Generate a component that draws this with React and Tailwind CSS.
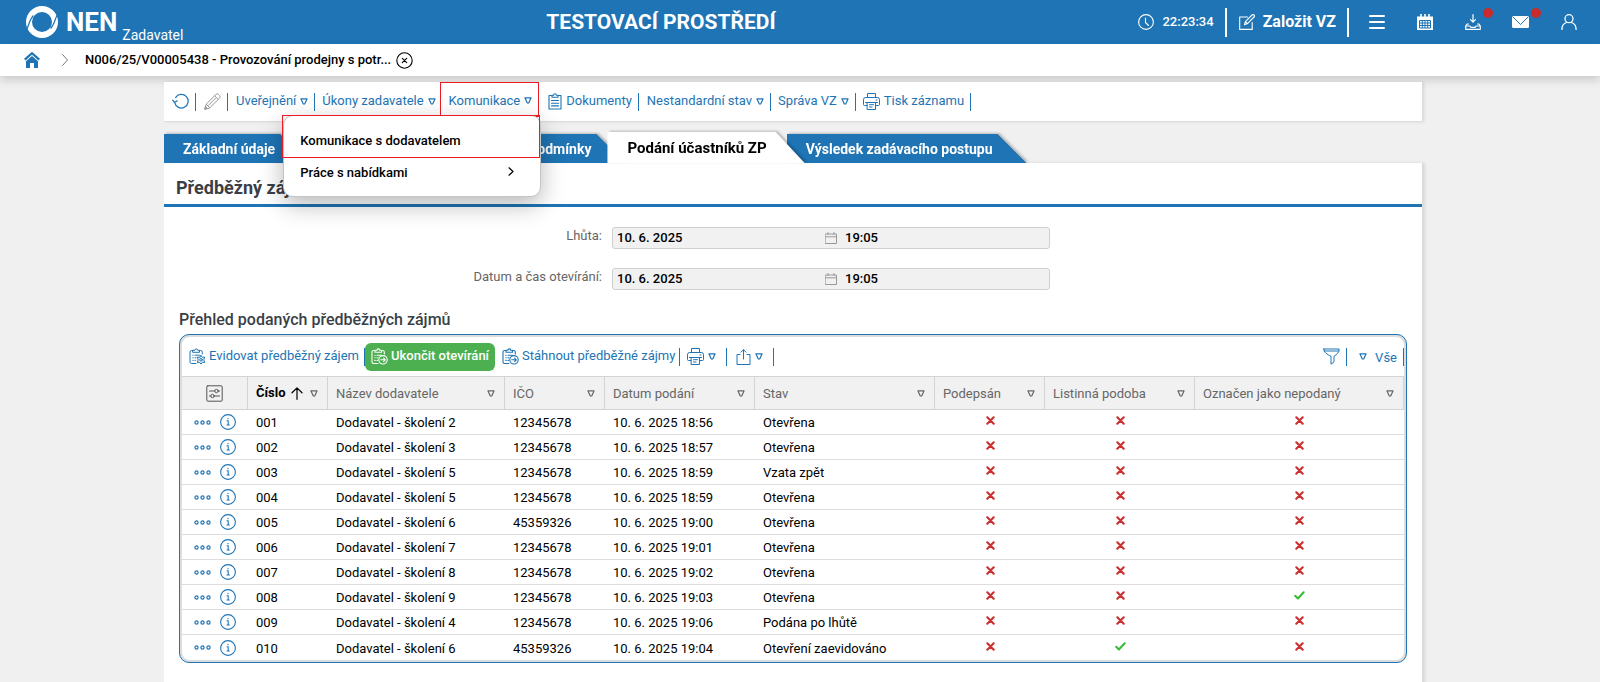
import React from "react";

function Svg({ className = "size-4", children, sw = 1, box = "0 0 16 16", fill = "none" }) {
  return (
    <svg
      className={`${className} shrink-0`}
      viewBox={box}
      fill={fill}
      stroke="currentColor"
      strokeWidth={sw}
      strokeLinecap="round"
      strokeLinejoin="round"
      aria-hidden="true"
    >
      {children}
    </svg>
  );
}

const Triangle = ({ className = "" }) => (
  <Svg className={`w-2 h-[7px] ${className}`} box="0 0 8 7" sw={1.2}>
    <path d="M1 .9h6L4.7 6H3.3Z" />
  </Svg>
);

const Refresh = () => (
  <Svg className="size-[17px]" box="0 0 17 17" sw={1.2}>
    <path d="M2.700 9.600A6.800 6.800 0 1 0 3.600 4.600M.6 7.200l2.100 2.300 2.500-1.700" />
  </Svg>
);

const Pencil = () => (
  <Svg className="size-[17px] text-[#999]" box="0 0 17 17">
    <path d="m1 16 1.200-4.800L12 1.400a1.700 1.700 0 0 1 2.400 0l1.200 1.200a1.700 1.700 0 0 1 0 2.400L5.800 14.800ZM2.200 11.200l3.600 3.600M10.600 2.800l3.600 3.600M4.400 12.400l7.400-7.400M1 16l2.400-.6-1.800-1.800Z" />
  </Svg>
);

const Clipboard = () => (
  <Svg className="w-[14px] h-[17px]" box="0 0 14 17" sw={1.1}>
    <path d="M4 2.500H1v13.500h12V2.500h-3M4 4.200h6V2.200H8.400a1.400 1.400 0 0 0-2.800 0H4Z" />
    <path d="M3.500 7.500h7M3.500 10.200h7M3.500 12.900h7" />
  </Svg>
);

const Printer = () => (
  <Svg className="size-[17px]" box="0 0 17 17">
    <path d="M4.500 4.500v-4h8v4M4 12.500H1.500a1 1 0 0 1-1-1v-5a2 2 0 0 1 2-2h12a2 2 0 0 1 2 2v5a1 1 0 0 1-1 1H13M4.500 9.500h8v7h-8ZM2.500 9.500h12M6.500 11.700h4M6.500 14h2.500M13 7h1" />
  </Svg>
);

const ClipboardBase = () => (
  <path d="M4 2.500H2.600a1.600 1.600 0 0 0-1.600 1.600v9.800a1.600 1.600 0 0 0 1.600 1.600H7M10.500 2.500h1.200a1.600 1.600 0 0 1 1.600 1.600V6M4 4.300h6.500V2.300H8.700a1.400 1.400 0 0 0-2.800 0H4ZM3.800 7.200h.4M6 7.200h4.500M3.800 9.800h.4M6 9.800h1M3.800 12.400h.4M6 12.400h.5" />
);

const ClipboardGear = () => (
  <Svg className="size-[17px]" box="0 0 17 17">
    <ClipboardBase />
    <circle cx="12" cy="11.800" r="1.300" />
    <path d="m12 7.500 1.300 1.800 2.300-.2-.8 2.700.8 2.700-2.300-.2-1.300 1.800-1.300-1.800-2.300.2.800-2.700-.8-2.700 2.300.2Z" />
  </Svg>
);

const ClipboardArrow = () => (
  <Svg className="size-[17px]" box="0 0 17 17" sw={1.1}>
    <ClipboardBase />
    <circle cx="12" cy="11.800" r="4.200" />
    <path d="M9.800 11.800h4.400M12.600 10.100l1.700 1.700-1.700 1.700" />
  </Svg>
);

const Share = () => (
  <Svg className="w-[15px] h-4" box="0 0 15 16">
    <path d="M4 5.500H1v10h13v-10h-3M7.500 10V.8M5 3.200 7.500.7 10 3.200" />
  </Svg>
);

const Funnel = () => (
  <Svg className="size-[17px]" box="0 0 17 17">
    <path d="M.8 1h15.400c0 3.600-2.400 5.400-5.200 7.200v5.600l-3 2.400V8.200C4.200 6.400.8 4.600.8 1ZM1.200 3h14.600" />
  </Svg>
);

const Settings = () => (
  <Svg className="size-[17px] text-[#555]" box="0 0 17 17">
    <rect x=".8" y=".8" width="15.400" height="15.400" rx="1" />
    <path d="M3.500 6h5M12.500 6h1M3.500 11h1M8.500 11h5" />
    <circle cx="10.500" cy="6" r="1.700" />
    <circle cx="6.500" cy="11" r="1.700" />
  </Svg>
);

const ArrowUp = () => (
  <Svg className="w-3 h-[13px]" box="0 0 12 13" sw={1.2}>
    <path d="M6 12.300V1M1 5.800 6 .9l5 4.900" />
  </Svg>
);

const Dots = () => (
  <Svg className="w-[17px] h-[5px]" box="0 0 17 5" sw={1.2}>
    <circle cx="2.500" cy="2.500" r="1.600" />
    <circle cx="8.500" cy="2.500" r="1.600" />
    <circle cx="14.500" cy="2.500" r="1.600" />
  </Svg>
);

const Info = () => (
  <Svg className="size-4" sw={1.1}>
    <circle cx="8" cy="8" r="7.400" />
    <path d="M7 6.800h1.200v4M7 11h2.400M8 4.300v.5" />
  </Svg>
);

const CalendarSmall = () => (
  <Svg className="size-3 text-[#999]" box="0 0 12 12">
    <path d="M.5 2h11v9.500H.5ZM.5 4.800h11M3 .5v2M9 .5v2" />
  </Svg>
);

const Cross = () => (
  <Svg className="size-[9px] text-[#cc2f2f]" box="0 0 9 9" sw={2.1}>
    <path d="m1.300 1.300 6.400 6.400M7.700 1.300 1.300 7.700" />
  </Svg>
);

const Check = () => (
  <Svg className="w-[11px] h-[9px] text-[#33bb33]" box="0 0 11 9" sw={2}>
    <path d="m1.200 4.800 2.700 2.700 5.800-6.200" />
  </Svg>
);

function HeaderIcon({ label, dot, children }) {
  return (
    <button type="button" aria-label={label} className="relative flex h-11 w-12 items-center justify-center">
      {children}
      {dot && <span className="absolute left-[34px] top-2 size-[10px] rounded-full bg-[#cc2b2b]" />}
    </button>
  );
}

function Header() {
  return (
    <header className="flex h-11 items-center justify-between bg-[#1e74b4] pl-[26px] pr-[7px] text-white">
      <div className="flex h-full items-center">
        <svg className="size-8 shrink-0" viewBox="0 0 32 32" aria-hidden="true">
          <circle cx="16" cy="16" r="13" fill="none" stroke="#fff" strokeWidth="6" />
          <path d="M.5 23.500C3 20 3.200 13.500 7.500 9.500M31.500 8.500C29 12 28.800 18.500 24.500 22.500" fill="none" stroke="#1e74b4" strokeWidth="1.200" />
        </svg>
        <span className="ml-2 text-[26px] font-bold leading-8">NEN</span>
        <span className="mb-[1px] ml-[5px] self-end text-sm leading-4">Zadavatel</span>
      </div>
      <h1 className="text-[21px] font-bold leading-6">TESTOVACÍ PROSTŘEDÍ</h1>
      <div className="flex items-center">
        <Svg sw={1.1}>
          <circle cx="8" cy="8" r="7.400" />
          <path d="M7.500 4v4.500l3 3" />
        </Svg>
        <time className="ml-2 text-[13px] font-medium">22:23:34</time>
        <span className="ml-[11px] h-[29px] w-[2px] bg-white" />
        <button type="button" className="ml-3 flex items-center gap-2 text-base font-bold leading-5">
          <Svg className="size-4" sw={1.1}>
            <path d="M8.500 3H.7v12.400h12.500V8.500M5.400 10.800l1-3.200L13 1a1.300 1.300 0 0 1 2 2L8.500 9.600ZM6.400 7.600l2.100 2" />
          </Svg>
          Založit VZ
        </button>
        <span className="ml-[11px] h-[29px] w-[2px] bg-white" />
        <div className="ml-1 flex">
          <HeaderIcon label="Menu">
            <Svg className="size-4" sw={2}>
              <path d="M1 2h14M1 8h14M1 14h14" />
            </Svg>
          </HeaderIcon>
          <HeaderIcon label="Kalendář">
            <svg className="size-4" viewBox="0 0 16 16" aria-hidden="true">
              <path d="M0 2.500h16V16H0Z" fill="#fff" />
              <path d="M4 0v4M8 0v4M12 0v4" stroke="#fff" strokeWidth="1.600" />
              <path d="M2.500 6.500h11v7.500h-11ZM2.500 9h11M2.500 11.500h11M5.300 6.500V14M8 6.500V14M10.700 6.500V14" fill="none" stroke="#1e74b4" strokeWidth="1" />
            </svg>
          </HeaderIcon>
          <HeaderIcon label="Stažené soubory" dot>
            <Svg sw={1.2}>
              <path d="M8 .7v7.500M5.500 5.700 8 8.200l2.500-2.500M3.500 10H2L.7 12v3.300h14.600V12L14 10h-1.500M.9 12h4l1 1.400h4.200l1-1.400h4" />
            </Svg>
          </HeaderIcon>
          <HeaderIcon label="Zprávy" dot>
            <svg className="h-3 w-[17px]" viewBox="0 0 17 12" aria-hidden="true">
              <rect width="17" height="12" rx="1.500" fill="#fff" />
              <path d="m1 1 7.500 7.500L16 1" fill="none" stroke="#1e74b4" strokeWidth="1" />
            </svg>
          </HeaderIcon>
          <HeaderIcon label="Uživatel">
            <Svg sw={1.3}>
              <circle cx="8" cy="4.700" r="4" />
              <path d="M.9 15.500c0-4 2.600-6.300 4.500-7M15.100 15.500c0-4-2.600-6.300-4.500-7" />
            </Svg>
          </HeaderIcon>
        </div>
      </div>
    </header>
  );
}

function Breadcrumb() {
  return (
    <nav className="relative z-0 flex h-8 items-center bg-white pl-6 shadow-[0_4px_10px_rgba(0,0,0,0.16)]">
      <a href="#home" aria-label="Domů" className="text-[#1e74b4]">
        <svg className="size-4" viewBox="0 0 16 16" aria-hidden="true">
          <path d="M.8 7.600 8 1.200l7.200 6.400" fill="none" stroke="currentColor" strokeWidth="2.200" />
          <path d="M2 9.200 8 4l6 5.200V16h-4v-5H6v5H2Z" fill="currentColor" />
        </svg>
      </a>
      <Svg className="ml-[22px] h-3 w-[6px] text-[#777]" box="0 0 6 12">
        <path d="m.5.5 5 5.500-5 5.500" />
      </Svg>
      <a href="#record" className="ml-[17px] text-[13px] font-medium text-black">
        N006/25/V00005438 - Provozování prodejny s potr...
      </a>
      <button type="button" aria-label="Zavřít" className="ml-[5px] text-black">
        <Svg className="size-[17px]" box="0 0 17 17" sw={1.1}>
          <circle cx="8.500" cy="8.500" r="7.700" />
          <path d="m6.300 6.300 4.400 4.400M10.700 6.300l-4.400 4.400" />
        </Svg>
      </button>
    </nav>
  );
}

function Tool({ icon, label, arrow, aria, className = "pl-[7px] pr-[6px]" }) {
  return (
    <button
      type="button"
      aria-label={aria}
      className={`flex h-[18px] items-center gap-1 whitespace-nowrap border-r border-[#1e74b4] leading-4 ${className}`}
    >
      {icon}
      {label && <span className="mb-[2px]">{label}</span>}
      {arrow && <Triangle />}
    </button>
  );
}

function RecordToolbar() {
  return (
    <div className="relative z-20 flex h-10 items-center border-b border-[#ddd] bg-white text-[13px] text-[#1e74b4] shadow-[2px_0_3px_rgba(0,0,0,0.1)]">
      <Tool aria="Obnovit" icon={<Refresh />} className="pl-2 pr-[6px]" />
      <Tool aria="Upravit" icon={<Pencil />} className="pl-2 pr-[6px]" />
      <Tool label="Uveřejnění" arrow className="pl-2 pr-[6px]" />
      <Tool label="Úkony zadavatele" arrow className="border-r-0 pl-[7px] pr-1" />
      <div className="relative h-full">
        <button type="button" aria-expanded="true" className="flex h-[35px] items-center gap-1 border border-[#ec1c24] pl-2 pr-[6px] pt-[2px]">
          Komunikace
          <Triangle />
        </button>
        <div className="absolute right-[-2px] top-[33px] h-[82px] w-[258px] rounded-[10px] border border-[#c4c4c4] bg-white font-medium text-black shadow-[0_8px_24px_rgba(0,0,0,0.28)]">
          <div className="flex flex-col pt-[9px]">
            <button type="button" className="flex h-8 items-center px-4">
              Komunikace s dodavatelem
            </button>
            <button type="button" className="flex h-8 items-center justify-between pl-4 pr-[26px]">
              Práce s nabídkami
              <Svg className="mb-1 h-[9px] w-[6px]" box="0 0 6 9" sw={1.2}>
                <path d="m1 .8 4 3.700L1 8.200" />
              </Svg>
            </button>
          </div>
          <div className="pointer-events-none absolute -left-[2px] -top-[1px] h-[43px] w-[258px] border border-[#ec1c24]" />
        </div>
      </div>
      <Tool label="Dokumenty" icon={<Clipboard />} className="pl-[9px] pr-[6px]" />
      <Tool label="Nestandardní stav" arrow className="pl-2 pr-[6px]" />
      <Tool label="Správa VZ" arrow />
      <Tool label="Tisk záznamu" icon={<Printer />} />
    </div>
  );
}

function Tab({ active, className = "", children }) {
  return (
    <div className={`drop-shadow-[2px_-1px_1px_rgba(0,0,0,0.22)] ${active ? "relative z-10" : ""} ${className}`}>
      <button
        type="button"
        role="tab"
        aria-selected={active ? "true" : "false"}
        className={`block w-full overflow-hidden whitespace-nowrap text-left font-bold [clip-path:polygon(0_0,calc(100%_-_29px)_0,100%_100%,0_100%)] ${
          active ? "h-[31px] bg-white pl-5 pr-[38px] pt-[2px] text-[15px] text-black" : "h-[29px] bg-[#1e74b4] pl-[19px] pr-[34px] pt-[1px] text-sm text-white"
        }`}
      >
        {children}
      </button>
    </div>
  );
}

function DateField({ id, label }) {
  return (
    <div className="flex items-center">
      <label htmlFor={id} className="mb-1 w-[438px] text-right text-[13px] leading-4 text-[#666]">
        {label}
      </label>
      <div className="ml-[10px] flex h-[22px] w-[438px] items-center rounded-[3px] border border-[#d0d0d0] bg-[#f1f1f1] text-[13px] font-medium text-black">
        <input id={id} readOnly defaultValue="10. 6. 2025" className="w-[208px] bg-transparent pl-1 outline-none" />
        <span className="ml-1">
          <CalendarSmall />
        </span>
        <input readOnly aria-label={`${label} čas`} defaultValue="19:05" className="ml-2 w-[120px] bg-transparent outline-none" />
      </div>
    </div>
  );
}

const columns = [
  "Název dodavatele",
  "IČO",
  "Datum podání",
  "Stav",
  "Podepsán",
  "Listinná podoba",
  "Označen jako nepodaný",
];

const rows = [
  ["001", "Dodavatel - školení 2", "12345678", "10. 6. 2025 18:56", "Otevřena", 0, 0, 0],
  ["002", "Dodavatel - školení 3", "12345678", "10. 6. 2025 18:57", "Otevřena", 0, 0, 0],
  ["003", "Dodavatel - školení 5", "12345678", "10. 6. 2025 18:59", "Vzata zpět", 0, 0, 0],
  ["004", "Dodavatel - školení 5", "12345678", "10. 6. 2025 18:59", "Otevřena", 0, 0, 0],
  ["005", "Dodavatel - školení 6", "45359326", "10. 6. 2025 19:00", "Otevřena", 0, 0, 0],
  ["006", "Dodavatel - školení 7", "12345678", "10. 6. 2025 19:01", "Otevřena", 0, 0, 0],
  ["007", "Dodavatel - školení 8", "12345678", "10. 6. 2025 19:02", "Otevřena", 0, 0, 0],
  ["008", "Dodavatel - školení 9", "12345678", "10. 6. 2025 19:03", "Otevřena", 0, 0, 1],
  ["009", "Dodavatel - školení 4", "12345678", "10. 6. 2025 19:06", "Podána po lhůtě", 0, 0, 0],
  ["010", "Dodavatel - školení 6", "45359326", "10. 6. 2025 19:04", "Otevření zaevidováno", 0, 1, 0],
];

function Grid() {
  return (
    <table className="w-full table-fixed border-separate border-spacing-0 text-[13px] leading-4 text-black">
      <colgroup>
        <col className="w-[66px]" />
        <col className="w-[80px]" />
        <col className="w-[177px]" />
        <col className="w-[100px]" />
        <col className="w-[150px]" />
        <col className="w-[180px]" />
        <col className="w-[110px]" />
        <col className="w-[150px]" />
        <col />
      </colgroup>
      <thead>
        <tr className="h-[34px] bg-[#f1f1f1] text-left text-[#666] [&>th]:border-y [&>th]:border-r [&>th]:border-[#d4d4d4] [&>th]:p-0 [&>th]:font-normal">
          <th>
            <button type="button" aria-label="Nastavení sloupců" className="mx-auto flex">
              <Settings />
            </button>
          </th>
          <th>
            <div className="flex items-center pl-2 pr-[9px]">
              <span className="font-bold text-black">Číslo</span>
              <span className="ml-[5px] text-black">
                <ArrowUp />
              </span>
              <Triangle className="ml-auto" />
            </div>
          </th>
          {columns.map((label) => (
            <th key={label}>
              <div className="flex items-center justify-between whitespace-nowrap pl-2 pr-[9px]">
                <span className="pt-[1px]">{label}</span>
                <Triangle />
              </div>
            </th>
          ))}
        </tr>
      </thead>
      <tbody>
        {rows.map((r, n) => (
          <tr key={r[0]} className={`h-[25px] [&>td]:border-[#ddd] ${n < rows.length - 1 ? "[&>td]:border-b" : ""}`}>
            <td className="p-0">
              <div className="flex items-center gap-[9px] pl-3 text-[#1e74b4]">
                <button type="button" aria-label="Akce">
                  <Dots />
                </button>
                <button type="button" aria-label="Detail">
                  <Info />
                </button>
              </div>
            </td>
            {r.slice(0, 5).map((v, i) => (
              <td key={i} className="whitespace-nowrap px-2 pb-0 pt-[2px]">
                {v}
              </td>
            ))}
            {r.slice(5).map((v, i) => (
              <td key={i} className="p-0">
                <span className="mb-[3px] flex justify-center" role="img" aria-label={v ? "Ano" : "Ne"}>
                  {v ? <Check /> : <Cross />}
                </span>
              </td>
            ))}
          </tr>
        ))}
      </tbody>
    </table>
  );
}

function GridPanel() {
  return (
    <section className="mt-1 overflow-hidden rounded-[10px] border border-[#1e74b4] bg-[#ddd] p-[2px]">
      <div className="overflow-hidden rounded-lg bg-white">
        <div className="flex h-[39px] items-center text-[13px] text-[#1e74b4]">
          <Tool label="Evidovat předběžný zájem" icon={<ClipboardGear />} className="gap-[3px] pl-[7px] pr-[5px]" />
          <button type="button" className="flex h-7 items-center gap-[3px] rounded-md bg-[#4caf50] px-[6px] font-medium text-white">
            <ClipboardArrow />
            <span className="mb-[1px]">Ukončit otevírání</span>
          </button>
          <Tool label="Stáhnout předběžné zájmy" icon={<ClipboardArrow />} className="gap-[3px] pl-[7px] pr-1" />
          <Tool aria="Tisk" icon={<Printer />} arrow className="pl-[7px] pr-[10px]" />
          <Tool aria="Export" icon={<Share />} arrow className="pl-[9px] pr-[10px]" />
          <div className="ml-auto flex items-center">
            <Tool aria="Filtr" icon={<Funnel />} />
            <button type="button" className="flex h-[18px] items-center gap-2 border-r border-[#1e74b4] pl-3 pr-[6px]">
              <Triangle />
              <span className="mt-[3px]">Vše</span>
            </button>
          </div>
        </div>
        <Grid />
      </div>
    </section>
  );
}

export default function App() {
  return (
    <div className="min-h-screen overflow-hidden bg-[#f0f0f0] font-['Roboto',sans-serif]">
      <Header />
      <Breadcrumb />
      <div className="pr-[14px] pt-[6px]">
        <main className="relative mx-auto max-w-[1258px]">
          <RecordToolbar />
          <div role="tablist" className="mt-[10px] flex items-end">
            <Tab>Základní údaje</Tab>
            <Tab className="ml-[141px]">Zadávací podmínky</Tab>
            <Tab active className="-ml-[18px]">
              Podání účastníků ZP
            </Tab>
            <Tab className="-ml-[18px]">Výsledek zadávacího postupu</Tab>
          </div>
          <div className="min-h-[540px] bg-white shadow-[3px_0_3px_rgba(0,0,0,0.1)]">
            <h2 className="h-11 border-b-[3px] border-[#1e74b4] pl-3 pt-[13px] text-lg font-bold leading-6 text-[#3a3f47]">
              Předběžný zájem
            </h2>
            <div className="flex flex-col gap-[19px] pt-5">
              <DateField id="lhuta" label="Lhůta:" />
              <DateField id="otevirani" label="Datum a čas otevírání:" />
            </div>
            <div className="px-[15px] pt-5">
              <h3 className="text-base font-medium leading-5 text-[#3a3f47]">Přehled podaných předběžných zájmů</h3>
              <GridPanel />
            </div>
          </div>
        </main>
      </div>
    </div>
  );
}
